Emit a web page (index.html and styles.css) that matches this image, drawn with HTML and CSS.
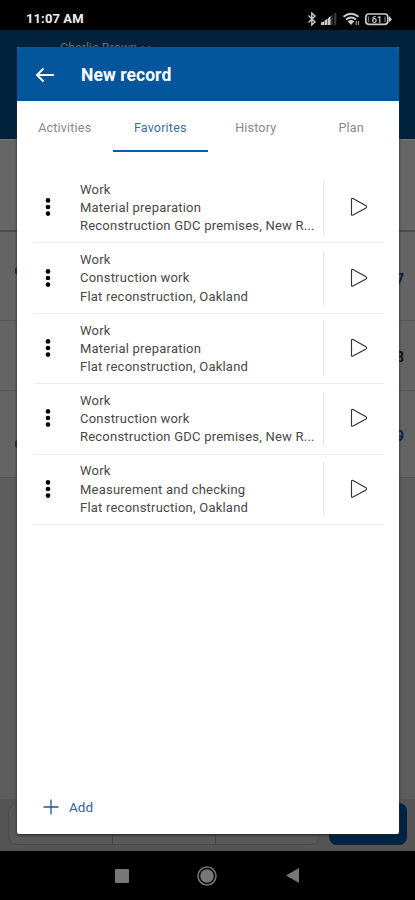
FILE: index.html
```html
<!DOCTYPE html>
<html lang="en">
<head>
<meta charset="utf-8">
<title>New record</title>
<link rel="stylesheet" href="styles.css">
</head>
<body>
<svg class="defs" aria-hidden="true">
  <symbol id="dots" viewBox="0 0 6 20"><circle cx="3" cy="3.4" r="2.3"/><circle cx="3" cy="10" r="2.3"/><circle cx="3" cy="16.6" r="2.3"/></symbol>
  <symbol id="play" viewBox="0 0 18 20"><path d="M1.5 2.6Q1.5 .9 3 1.6L16 8.8Q17.2 10 16 10.9L3 18Q1.5 18.8 1.5 17.2Z" fill="none" stroke="#333" stroke-width="1.15"/></symbol>
</svg>
<div class="phone">
  <header class="status">
    <span class="time">11:07 AM</span>
    <svg class="status-icons" viewBox="0 0 86 16">
      <path d="M1.5 4.5 8 11 4.8 14V2L8 5 1.5 11.5" fill="none" stroke="#ccc" stroke-width="1.4"/>
      <path d="M14 14V11.6L17 10.4V14Z M17.5 14V9.8L20.3 7.8V14Z M20.8 14V7.4L23.6 5V14Z" fill="#ccc"/>
      <path d="M24.2 14V4.5L25.8 3.6V14Z M27 14V2.7L29.3 1.5V14Z" fill="#3a3a3a"/>
      <path d="M36.5 5.7Q44 -.4 51.5 5.7M39 8.6Q44 4.3 49 8.6" fill="none" stroke="#ccc" stroke-width="1.9"/>
      <path d="M40.7 10.2Q44 7.7 47.3 10.2L44 14Z" fill="#ccc"/>
      <path d="M49.2 10V14M51.4 10V14" stroke="#999" stroke-width="1.2"/>
      <rect x="58.8" y="3" width="22" height="10.3" rx="3" fill="none" stroke="#ccc" stroke-width="1.7"/>
      <path d="M82 5 85 8.2 82 11.4Z" fill="#ccc"/>
      <path d="M61.5 5.5V11M78 5.5V11" stroke="#777" stroke-width="1.2"/>
      <text x="69.8" y="11.5" text-anchor="middle" class="battery">61</text>
    </svg>
  </header>
  <main class="stage">
    <div class="under">
      <div class="under-head"><span>Charlie Brown</span><i></i><i></i></div>
      <div class="under-filter"></div>
      <div class="under-row r1"><b class="chip"></b><span>7</span></div>
      <div class="under-row r2"><span>8</span></div>
      <div class="under-row r3"><b class="chip"></b><span>9</span></div>
      <div class="under-rest"></div>
      <div class="under-foot"><div class="segments"><i></i><i></i><i></i></div><div class="start"></div></div>
    </div>
    <section class="modal">
      <div class="title">
        <svg viewBox="0 0 20 16"><path d="M19 8H2M8.5 1.5 2 8 8.5 14.5" fill="none" stroke="#fff" stroke-width="1.9"/></svg>
        <h1>New record</h1>
      </div>
      <nav class="tabs"><span>Activities</span><span class="active">Favorites</span><span>History</span><span>Plan</span></nav>
      <ul class="list">
        <li><svg class="dots"><use href="#dots"/></svg><div class="text"><p>Work</p><p>Material preparation</p><p>Reconstruction GDC premises, New R...</p></div><div class="run"><svg class="play"><use href="#play"/></svg></div></li>
        <li><svg class="dots"><use href="#dots"/></svg><div class="text"><p>Work</p><p>Construction work</p><p>Flat reconstruction, Oakland</p></div><div class="run"><svg class="play"><use href="#play"/></svg></div></li>
        <li><svg class="dots"><use href="#dots"/></svg><div class="text"><p>Work</p><p>Material preparation</p><p>Flat reconstruction, Oakland</p></div><div class="run"><svg class="play"><use href="#play"/></svg></div></li>
        <li><svg class="dots"><use href="#dots"/></svg><div class="text"><p>Work</p><p>Construction work</p><p>Reconstruction GDC premises, New R...</p></div><div class="run"><svg class="play"><use href="#play"/></svg></div></li>
        <li><svg class="dots"><use href="#dots"/></svg><div class="text"><p>Work</p><p>Measurement and checking</p><p>Flat reconstruction, Oakland</p></div><div class="run"><svg class="play"><use href="#play"/></svg></div></li>
      </ul>
      <div class="add"><svg viewBox="0 0 16 16"><path d="M8 .5V15.5M.5 8H15.5" stroke="#1b5796" stroke-width="1.3"/></svg><span>Add</span></div>
    </section>
  </main>
  <footer class="keys">
    <svg class="key-recent" viewBox="0 0 14 14"><rect width="14" height="14" rx="1"/></svg>
    <svg class="key-home" viewBox="0 0 20 20"><circle cx="10" cy="10" r="9" fill="none" stroke="#777" stroke-width="1.5"/><circle cx="10" cy="10" r="6.8"/></svg>
    <svg class="key-back" viewBox="0 0 13 15"><path d="M0 7.5 13 0V15Z"/></svg>
  </footer>
</div>
</body>
</html>
```
FILE: styles.css
```css
* { box-sizing: border-box; margin: 0; padding: 0; }
body { width: 415px; height: 900px; overflow: hidden; background: #000; font-family: Roboto, "Liberation Sans", sans-serif; }
svg { display: block; }
.defs { display: none; }
.phone { display: flex; flex-direction: column; height: 900px; }

.status { height: 30px; display: flex; justify-content: space-between; align-items: flex-start; padding: 11px 22px 0 26px; }
.time { color: #eee; font-size: 13px; font-weight: 700; line-height: 16px; letter-spacing: .1px; }
.status-icons { width: 86px; height: 16px; }
.battery { font-size: 9px; font-weight: 700; fill: #bbb; }

.stage { display: grid; height: 821px; overflow: hidden; }
.under, .modal { grid-area: 1 / 1; }
.under { display: flex; flex-direction: column; background: #646464; }
.under-head { height: 109px; display: flex; align-items: flex-start; gap: 4px; padding: 9px 0 0 60px; background: #00223d; color: #66727d; font-size: 12.5px; line-height: 17px; }
.under-head i { width: 3px; height: 1px; margin-top: 7px; background: #41515e; }
.under-filter { height: 93px; background: #666; border-top: 1px solid #777; border-bottom: 2px solid #4c4c4c; }
.under-row { display: flex; justify-content: flex-end; align-items: center; padding-right: 11px; border-bottom: 1px solid #555; font-size: 14px; font-weight: 700; }
.chip { width: 8px; height: 8px; margin: 0 auto 0 15px; border-radius: 3px; background: #063553; }
.r1 { height: 89px; color: #061e38; padding-top: 6px; }
.r1 .chip { margin-bottom: 16px; }
.r2 { height: 70px; color: #111; padding-top: 2px; }
.r3 { height: 87px; color: #062350; padding-top: 3px; }
.r3 .chip { margin-top: 16px; }
.under-rest { flex: 1; background: #5d5d5d; }
.under-foot { height: 52px; display: flex; gap: 9px; padding: 4px 8px 6px; background: #555; }
.segments { flex: 1; display: flex; border: 1px solid #4a4a4a; border-radius: 9px; background: #595959; }
.segments i { flex: 1; border-right: 1px solid #424242; }
.segments i:last-child { border: 0; }
.start { width: 78px; border-radius: 8px; background: #002345; }

.modal { width: 382px; height: 787px; margin: 17px 0 0 17px; display: flex; flex-direction: column; border-radius: 2px; overflow: hidden; background: #fff; box-shadow: 0 1px 3px #222; }
.title { height: 54px; display: flex; align-items: center; gap: 26px; padding: 2px 0 0 18px; background: #03569b; color: #fff; }
.title svg { width: 20px; height: 16px; }
h1 { font-size: 17.5px; font-weight: 700; line-height: 22px; letter-spacing: .05px; }
.tabs { height: 51px; display: grid; grid-template: 51px / repeat(4, 95.5px); color: #888; font-size: 12.5px; letter-spacing: .2px; line-height: 54px; text-align: center; }
.tabs .active { color: #3a6ea3; border-bottom: 2px solid #165a9c; }
.list { list-style: none; flex: 1; padding: 21px 15px 0 16px; }
.list li { height: 70.4px; display: flex; align-items: center; border-bottom: 1px solid #ececec; }
.dots { width: 6px; height: 20px; margin: 0 0 1px 12px; fill: #000; }
.text { width: 243px; margin-left: 29px; padding-top: 1px; color: #484848; font-size: 13px; line-height: 18.2px; letter-spacing: .22px; white-space: nowrap; }
.run { flex: 1; height: 54px; display: flex; align-items: center; border-left: 1px solid #e4e4e4; padding-left: 26px; }
.play { width: 18px; height: 20px; margin-bottom: 1px; }
.add { height: 54px; display: flex; align-items: center; gap: 10px; padding-left: 26px; color: #2d639b; font-size: 13.5px; }
.add svg { width: 16px; height: 16px; }

.keys { height: 49px; display: flex; align-items: center; padding-left: 115px; fill: #777; }
.key-recent { width: 14px; height: 14px; }
.key-home { width: 20px; height: 20px; margin-left: 68px; }
.key-back { width: 13px; height: 15px; margin-left: 69px; }
```
